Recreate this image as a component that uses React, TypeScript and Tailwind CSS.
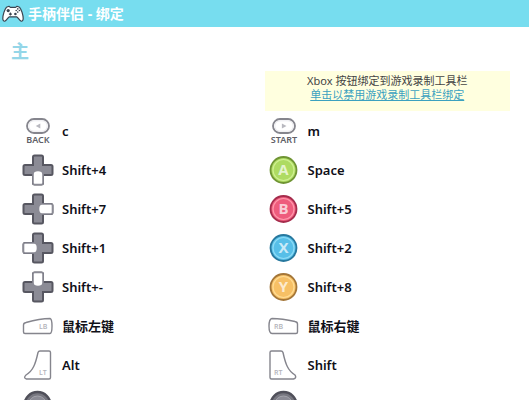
import type { ReactNode } from "react";

type Direction = "up" | "down" | "left" | "right";

const padRotation: Record<Direction, number> = {
  down: 0,
  left: 90,
  up: 180,
  right: 270,
};

function ControllerIcon() {
  return (
    <svg viewBox="0 0 22 18" className="h-[18px] w-[22px]" aria-hidden="true">
      <path
        d="M4.4 2.3 7 1.3 8.4 2.4H13.6L15 1.3 17.6 2.3C19.4 4.3 21.2 10 21.2 13.6 21.2 15.6 20.2 16.4 19.2 16.2 17.6 15.8 16.2 12.6 14.6 11.8H7.4C5.8 12.6 4.4 15.8 2.8 16.2 1.8 16.4.8 15.6.8 13.6.8 10 2.6 4.3 4.4 2.3Z"
        fill="#fff"
        stroke="#39434f"
        strokeWidth="1.2"
        strokeLinejoin="round"
      />
      <circle cx="6.2" cy="5.6" r="1.6" fill="#39434f" />
      <circle cx="13.4" cy="9" r="1.3" fill="#39434f" />
      <path d="M8.4 7.6v3M6.9 9.1h3" stroke="#39434f" strokeWidth="1.1" />
      <circle cx="15.8" cy="3.9" r=".8" fill="#39434f" />
      <circle cx="15.8" cy="7.1" r=".8" fill="#39434f" />
      <circle cx="14.2" cy="5.5" r=".8" fill="#39434f" />
      <circle cx="17.4" cy="5.5" r=".8" fill="#39434f" />
    </svg>
  );
}

function MenuButton({ label, back }: { label: string; back?: boolean }) {
  return (
    <svg viewBox="0 0 32 32" className="size-8 overflow-visible" aria-hidden="true">
      <rect x="5" y="4" width="22" height="14" rx="7" fill="#fff" stroke="#85858d" strokeWidth="1.8" />
      <rect x="6.8" y="5.8" width="18.4" height="10.4" rx="5.2" fill="none" stroke="#ececf0" />
      <path d={back ? "M18.3 8.6v4.8L13.7 11Z" : "M13.9 8.6v4.8L18.5 11Z"} fill="#b9b9c0" />
      <text
        x="16"
        y="28"
        textAnchor="middle"
        fill="#606067"
        fontSize="9"
        fontWeight="600"
        fontFamily="'Noto Sans', sans-serif"
      >
        {label}
      </text>
    </svg>
  );
}

function DPad({ pressed }: { pressed: Direction }) {
  return (
    <svg viewBox="0 0 32 32" className="size-8" aria-hidden="true">
      <g transform={`rotate(${padRotation[pressed]} 16 16)`}>
        <path
          d="M12.5 1.5h7q1.5 0 1.5 1.5v8h8q1.5 0 1.5 1.5v7q0 1.5-1.5 1.5h-8v8q0 1.5-1.5 1.5h-7q-1.5 0-1.5-1.5v-8H3q-1.5 0-1.5-1.5v-7q0-1.5 1.5-1.5h8V3q0-1.5 1.5-1.5Z"
          fill="#8b8b95"
          stroke="#575761"
          strokeWidth="2"
        />
        <path
          d="M11 29V20q0-3.5 5-3.5t5 3.5v9q0 1.5-1.5 1.5h-7Q11 30.5 11 29Z"
          fill="#fff"
          stroke="#8b8b95"
          strokeWidth="1.6"
        />
      </g>
    </svg>
  );
}

function FaceButton({ label, rim, fill, ring }: { label: string; rim: string; fill: string; ring: string }) {
  return (
    <svg viewBox="0 0 32 32" className="size-8" aria-hidden="true">
      <circle cx="15.5" cy="16" r="13" fill={fill} stroke={rim} strokeWidth="1.8" />
      <circle cx="15.5" cy="16" r="10.5" fill="none" stroke={ring} strokeWidth="1.2" />
      <text
        x="15.5"
        y="21"
        textAnchor="middle"
        fill="#fff"
        fillOpacity=".7"
        fontSize="15"
        fontWeight="700"
        fontFamily="'Open Sans', sans-serif"
      >
        {label}
      </text>
    </svg>
  );
}

function ShoulderLabel({ x, y, children }: { x: number; y: number; children: string }) {
  return (
    <text x={x} y={y} fill="#b3b3ba" fontSize="7" fontWeight="600" fontFamily="'Open Sans', sans-serif">
      {children}
    </text>
  );
}

function Bumper({ label, right }: { label: string; right?: boolean }) {
  return (
    <svg viewBox="0 0 32 32" className="size-8" aria-hidden="true">
      <path
        d={
          right
            ? "M4 8.5 Q14 8.5 27 11.5 Q29.5 12 29.5 14V22q0 1.5-1.5 1.5H4Q1 23.5 1 16 1 9 4 8.5Z"
            : "M28 8.5 Q18 8.5 4 12.5 Q1.5 13 1.5 15V22q0 1.5 1.5 1.5H28Q30 23.5 30 16 30 9 28 8.5Z"
        }
        fill="#fff"
        stroke="#85858d"
        strokeWidth="1.4"
      />
      <ShoulderLabel x={right ? 6 : 17} y={19}>
        {label}
      </ShoulderLabel>
    </svg>
  );
}

function Trigger({ label, right }: { label: string; right?: boolean }) {
  return (
    <svg viewBox="0 0 32 32" className="size-8" aria-hidden="true">
      <path
        d={
          right
            ? "M3.5 2H13q1.5 0 2 1.5C17.5 15 20 22 27 26q2 3-1.5 4H3.5Q2 30 2 28.5V3.5Q2 2 3.5 2Z"
            : "M27 2H18q-1.5 0-2 1.5C13.5 15 11 22 4 26q-3 3 .5 4H27q1.5 0 1.5-1.5V3.5Q28.5 2 27 2Z"
        }
        fill="#fff"
        stroke="#85858d"
        strokeWidth="1.4"
      />
      <ShoulderLabel x={right ? 6 : 17} y={26}>
        {label}
      </ShoulderLabel>
    </svg>
  );
}

function Stick() {
  return (
    <svg viewBox="0 0 32 32" className="size-8" aria-hidden="true">
      <circle cx="15.5" cy="17" r="13" fill="#777780" stroke="#50505a" strokeWidth="2.5" />
      <circle cx="15.5" cy="17" r="9" fill="#8b8b95" stroke="#a3a3ab" />
    </svg>
  );
}

const bindings: { icon: ReactNode; value: string }[] = [
  { icon: <MenuButton label="BACK" back />, value: "c" },
  { icon: <MenuButton label="START" />, value: "m" },
  { icon: <DPad pressed="down" />, value: "Shift+4" },
  { icon: <FaceButton label="A" rim="#6f9433" fill="#aedb62" ring="#d0f092" />, value: "Space" },
  { icon: <DPad pressed="right" />, value: "Shift+7" },
  { icon: <FaceButton label="B" rim="#a52c4c" fill="#ee5c7d" ring="#ff98ac" />, value: "Shift+5" },
  { icon: <DPad pressed="left" />, value: "Shift+1" },
  { icon: <FaceButton label="X" rim="#27789e" fill="#57bfe8" ring="#8edcf6" />, value: "Shift+2" },
  { icon: <DPad pressed="up" />, value: "Shift+-" },
  { icon: <FaceButton label="Y" rim="#a47638" fill="#f7c065" ring="#ffdc94" />, value: "Shift+8" },
  { icon: <Bumper label="LB" />, value: "鼠标左键" },
  { icon: <Bumper label="RB" right />, value: "鼠标右键" },
  { icon: <Trigger label="LT" />, value: "Alt" },
  { icon: <Trigger label="RT" right />, value: "Shift" },
  { icon: <Stick />, value: "" },
  { icon: <Stick />, value: "" },
];

export default function App() {
  return (
    <main className="h-screen overflow-hidden bg-white font-['Noto_Sans','Noto_Sans_CJK_SC',sans-serif] text-[#101018]">
      <header className="flex h-[27px] items-center gap-1 bg-[#77ddef] px-0.5 text-white">
        <ControllerIcon />
        <h1 className="text-[14px] leading-5 font-bold">手柄伴侣 - 绑定</h1>
      </header>

      <h2 className="mt-3 px-[11px] text-[18px] leading-6 font-bold text-[#94d6e8]">主</h2>

      <section className="mt-2 px-[19px]">
        <div className="ml-[50%] bg-[#ffffdf] pt-[3px] pb-[9px] text-center text-[11px] leading-[14px] text-[#444]">
          <p>Xbox 按钮绑定到游戏录制工具栏</p>
          <a href="#game-bar" className="block text-[#3ba1bf] underline">
            单击以禁用游戏录制工具栏绑定
          </a>
        </div>

        <ul className="grid grid-cols-2">
          {bindings.map(({ icon, value }, index) => (
            <li key={index} className="flex h-[39px] items-center gap-2 pl-[3px] text-[13px] leading-5 font-semibold">
              {icon}
              <span>{value}</span>
            </li>
          ))}
        </ul>
      </section>
    </main>
  );
}
